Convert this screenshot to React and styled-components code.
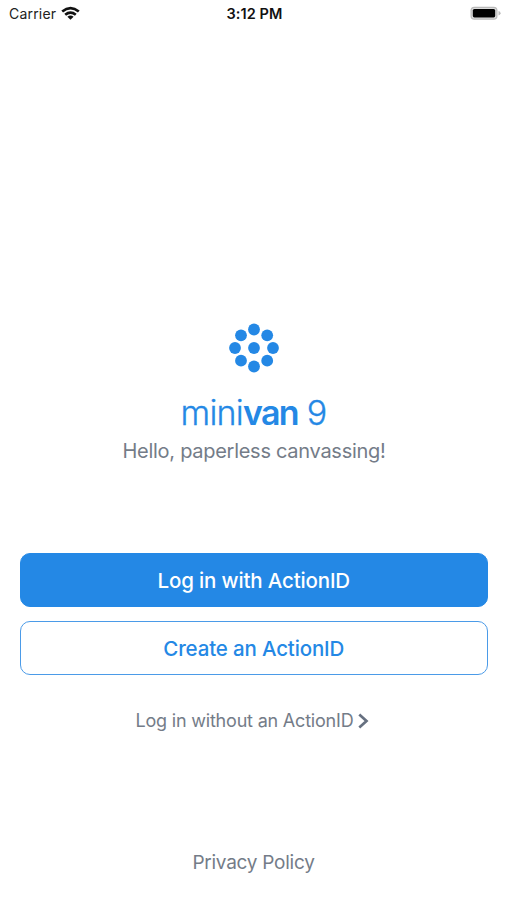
import React from 'react';
import styled, { createGlobalStyle } from 'styled-components';

const GlobalStyle = createGlobalStyle`
  *, *::before, *::after { box-sizing: border-box; }
  body { margin: 0; background: #fff; overflow: hidden; }
`;

const Screen = styled.div`
  width: 507px;
  height: 900px;
  display: flex;
  flex-direction: column;
  background: #fff;
  color: #747c88;
  font-family: Inter, 'Liberation Sans', sans-serif;
`;

const StatusBar = styled.header`
  height: 28px;
  padding: 0 6px 0 9px;
  display: grid;
  grid-template-columns: 1fr auto 1fr;
  align-items: center;
  color: #222;
  font-size: 14px;
  line-height: 28px;
`;

const Network = styled.div`
  display: flex;
  align-items: center;
  gap: 5px;
  letter-spacing: 0.2px;
`;

const WifiIcon = styled.svg`
  width: 19px;
  height: 14px;
  margin-top: -2px;
`;

const Clock = styled.time`
  margin-left: -1px;
  color: #111;
  font-size: 14.5px;
  font-weight: 600;
  letter-spacing: 0.1px;
`;

const BatteryIcon = styled.svg`
  width: 31px;
  height: 14px;
  margin-top: -2px;
  justify-self: end;
`;

const Brand = styled.main`
  margin-top: 294px;
  display: flex;
  flex-direction: column;
  align-items: center;
`;

const Logo = styled.svg`
  width: 52px;
  height: 52px;
  margin-left: 1px;
  fill: #2488e5;
`;

const Title = styled.h1`
  margin: 18px 0 0;
  color: #2488e5;
  font-size: 34px;
  line-height: 42px;
  font-weight: 300;
  letter-spacing: -0.75px;
  white-space: pre;
  -webkit-text-stroke: 0.3px #2488e5;

  strong {
    font-weight: 600;
    letter-spacing: -1.7px;
    -webkit-text-stroke: 0;
  }
`;

const Tagline = styled.p`
  margin: 4px 0 0 1px;
  font-size: 20px;
  line-height: 26px;
  letter-spacing: -0.28px;
`;

const Actions = styled.section`
  margin: 89px 19.5px 0 20px;
  display: flex;
  flex-direction: column;
  gap: 14px;
`;

const Button = styled.button`
  height: 54px;
  padding: 0;
  border: 1.5px solid ${(p) => (p.$filled ? '#2488e5' : '#4b9be8')};
  border-radius: 10px;
  background: ${(p) => (p.$filled ? '#2488e5' : '#fff')};
  color: ${(p) => (p.$filled ? '#fff' : '#2488e5')};
  font: inherit;
  font-size: 20.5px;
  font-weight: 550;
  letter-spacing: -0.15px;
`;

const TextLink = styled.a`
  align-self: center;
  display: flex;
  align-items: center;
  gap: 5px;
  margin-top: ${(p) => p.$top};
  font-size: ${(p) => p.$size};
  line-height: 26px;
  letter-spacing: ${(p) => p.$tracking};
`;

const Chevron = styled.svg`
  width: 11px;
  height: 16px;
  margin-right: 2px;
  fill: none;
  stroke: #667080;
  stroke-width: 2.7;
`;

const logoDots = [
  [26, 7.5], [39.2, 13.3], [45, 26], [39.2, 38.7], [26, 44.5],
  [13, 38.7], [7, 26], [13, 13.3], [26, 26],
];

export default function App() {
  return (
    <Screen>
      <GlobalStyle />
      <StatusBar>
        <Network>
          <span>Carrier</span>
          <WifiIcon viewBox="0 0 19 14" fill="none" stroke="#111" strokeWidth="2.7">
            <path d="M1.2 5.5Q9.5 -1.2 17.8 5.5" />
            <path d="M4.2 8.7Q9.5 4.4 14.8 8.7" />
            <path d="M6.4 10.8Q9.5 8.4 12.6 10.8L9.5 13.8Z" fill="#111" stroke="none" />
          </WifiIcon>
        </Network>
        <Clock>3:12 PM</Clock>
        <BatteryIcon viewBox="0 0 31 14">
          <rect x="0.5" y="0.7" width="27" height="13" rx="3.8" fill="#b9b9b9" />
          <rect x="1.7" y="1.9" width="24.6" height="10.6" rx="2.6" fill="#dcdcdc" />
          <rect x="2.8" y="3" width="22.4" height="8.4" rx="1.6" fill="#000" />
          <path d="M28.5 5Q30.6 5.6 30.6 7.2T28.5 9.4Z" fill="#bbb" />
        </BatteryIcon>
      </StatusBar>
      <Brand>
        <Logo viewBox="0 0 52 52">
          {logoDots.map(([x, y]) => <circle key={`${x}-${y}`} cx={x} cy={y} r="5.9" />)}
        </Logo>
        <Title>mini<strong>van</strong> 9</Title>
        <Tagline>Hello, paperless canvassing!</Tagline>
      </Brand>
      <Actions>
        <Button $filled>Log in with ActionID</Button>
        <Button>Create an ActionID</Button>
      </Actions>
      <TextLink $top="33px" $size="18px" $tracking="-0.2px">
        Log in without an ActionID
        <Chevron viewBox="0 0 11 16"><path d="M1.3 1.5L8.5 8L1.3 14.5" /></Chevron>
      </TextLink>
      <TextLink $top="116px" $size="19px" $tracking="-0.25px">Privacy Policy</TextLink>
    </Screen>
  );
}
